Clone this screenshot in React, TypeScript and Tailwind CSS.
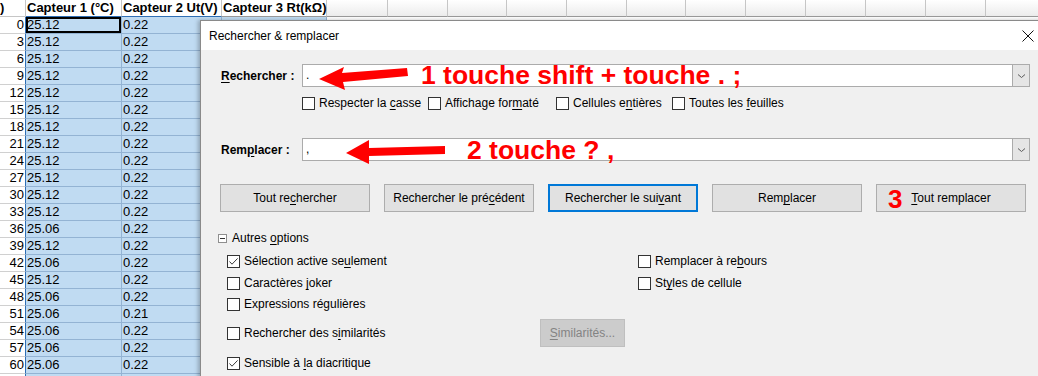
import React from "react";

const ROWS: [number, string, string][] = [
  [0, "25.12", "0.22"],
  [3, "25.12", "0.22"],
  [6, "25.12", "0.22"],
  [9, "25.12", "0.22"],
  [12, "25.12", "0.22"],
  [15, "25.12", "0.22"],
  [18, "25.12", "0.22"],
  [21, "25.12", "0.22"],
  [24, "25.12", "0.22"],
  [27, "25.12", "0.22"],
  [30, "25.12", "0.22"],
  [33, "25.12", "0.22"],
  [36, "25.06", "0.22"],
  [39, "25.12", "0.22"],
  [42, "25.06", "0.22"],
  [45, "25.12", "0.22"],
  [48, "25.06", "0.22"],
  [51, "25.06", "0.21"],
  [54, "25.06", "0.22"],
  [57, "25.06", "0.22"],
  [60, "25.06", "0.22"],
];

const EXTRA_COLS = [61, 60, 59, 60, 60, 59, 60, 60, 60, 60, 60, 60];

function U({ children }: { children: React.ReactNode }) {
  return <span className="underline underline-offset-2">{children}</span>;
}

function Sheet() {
  return (
    <div className="flex flex-col font-['Liberation_Sans',Arial,sans-serif] text-[13px] text-black">
      <div className="flex h-[17px]">
        <div className="w-[26px] shrink-0 border-r border-b border-[#c6c6c6] font-bold leading-[16px]">)</div>
        <div className="w-[96px] shrink-0 border-r border-b border-r-[#c6c6c6] border-b-[#2f6fb5] pl-px font-bold leading-[16px]">
          Capteur 1 (°C)
        </div>
        <div className="w-[100px] shrink-0 border-r border-b border-r-[#c6c6c6] border-b-[#2f6fb5] pl-px font-bold leading-[16px]">
          Capteur 2 Ut(V)
        </div>
        <div className="w-[105px] shrink-0 border-r border-b border-r-[#c6c6c6] border-b-[#9a9a9a] pl-px font-bold leading-[16px] whitespace-nowrap">
          Capteur 3 Rt(kΩ)
        </div>
        {EXTRA_COLS.map((w, i) => (
          <div
            key={i}
            style={{ width: w }}
            className="shrink-0 border-r border-b border-r-[#c6c6c6] border-b-[#9a9a9a] bg-gradient-to-b from-white to-[#ececec]"
          />
        ))}
      </div>
      {ROWS.map(([n, a, b], i) => (
        <div key={n} className="flex h-[17px]">
          <div className="w-[26px] shrink-0 border-r border-b border-r-[#2f6fb5] border-b-[#d0d0d0] pr-px text-right leading-[16px]">
            {n}
          </div>
          <div
            className={`w-[96px] shrink-0 border-r border-b border-[#93b3d3] bg-[#c0dbf2] pl-px leading-[16px] ${
              i === 0 ? "shadow-[inset_0_0_0_2px_#000]" : ""
            }`}
          >
            {a}
          </div>
          <div className="w-[100px] shrink-0 border-r border-b border-[#93b3d3] bg-[#c0dbf2] pl-px leading-[16px]">{b}</div>
          <div className="w-[105px] shrink-0 border-r border-b border-[#93b3d3] bg-[#c0dbf2]" />
        </div>
      ))}
      {/* partial row below the last visible one */}
      <div className="flex h-[17px]">
        <div className="w-[26px] shrink-0 border-r border-r-[#2f6fb5]" />
        <div className="w-[96px] shrink-0 border-r border-[#93b3d3] bg-[#c0dbf2]" />
        <div className="w-[100px] shrink-0 border-r border-[#93b3d3] bg-[#c0dbf2]" />
      </div>
    </div>
  );
}

function Box({ checked }: { checked?: boolean }) {
  return (
    <span className="flex h-[13px] w-[13px] shrink-0 items-center justify-center border border-[#333333] bg-white">
      {checked ? (
        <svg width="11" height="11" viewBox="0 0 11 11">
          <path d="M1.5 5.5 L4 8.2 L9.6 2.4" fill="none" stroke="#3c3c3c" strokeWidth="1" />
        </svg>
      ) : null}
    </span>
  );
}

function Check({
  checked,
  children,
  className,
}: {
  checked?: boolean;
  children: React.ReactNode;
  className?: string;
}) {
  return (
    <div className={`flex h-[13px] shrink-0 items-center gap-[4px] ${className ?? ""}`}>
      <Box checked={checked} />
      <span className="whitespace-nowrap leading-[13px]">{children}</span>
    </div>
  );
}

function Btn({
  children,
  focused,
  extra,
}: {
  children: React.ReactNode;
  focused?: boolean;
  extra?: React.ReactNode;
}) {
  return (
    <div
      className={`relative flex h-[28px] w-[150px] shrink-0 items-center justify-center bg-[#e1e1e1] ${
        focused ? "border-2 border-[#0078d7]" : "border border-[#adadad]"
      }`}
    >
      {extra}
      <span className="whitespace-nowrap">{children}</span>
    </div>
  );
}

function Combo({ value, children }: { value: string; children?: React.ReactNode }) {
  return (
    <div className="relative flex h-[23px] w-[728px] shrink-0 border border-[#ababab] bg-white">
      <span className="flex-1 pl-[3px] leading-[20px]">{value}</span>
      <span className="flex w-[17px] items-center justify-center border-l border-[#ababab] bg-[#e5e5e5]">
        <svg width="9" height="6" viewBox="0 0 9 6">
          <path d="M1 1.5 L4.5 4.5 L8 1.5" fill="none" stroke="#5a5a5a" strokeWidth="1" />
        </svg>
      </span>
      {children}
    </div>
  );
}

function Dialog() {
  return (
    <div className="absolute left-[200px] top-[20px] flex h-[360px] w-[851px] flex-col border-t border-l border-[#8a8a8a] bg-[#f0f0f0] font-['Liberation_Sans',Arial,sans-serif] text-[12px] text-black shadow-[-2px_0_4px_rgba(0,0,0,0.25)]">
      <div className="flex h-[29px] shrink-0 items-center justify-between bg-white pl-[8px]">
        <span>Rechercher &amp; remplacer</span>
        <span className="flex h-[29px] w-[46px] items-center justify-center">
          <svg width="12" height="12" viewBox="0 0 12 12">
            <path d="M0.5 0.5 L11.5 11.5 M11.5 0.5 L0.5 11.5" stroke="#111" strokeWidth="1" />
          </svg>
        </span>
      </div>

      <div className="flex flex-1 flex-col pl-[20px] pt-[14px]">
        <div className="flex items-center">
          <span className="w-[81px] shrink-0 font-bold">
            <U>R</U>echercher :
          </span>
          <Combo value=".">
            <svg className="absolute left-0 top-0 overflow-visible" width="120" height="26" viewBox="0 0 120 26">
              <polygon points="16,14 41,2 39,8 104,3 105,11 40,17 42,25" fill="#ff0000" />
            </svg>
            <span className="absolute left-[118px] top-[-3px] whitespace-nowrap text-[26.5px] font-bold leading-[26px] text-[#ff0000]">
              1 touche shift + touche . ;
            </span>
          </Combo>
        </div>

        <div className="ml-[81px] mt-[10px] flex">
          <Check className="w-[126px]">
            Respecter la <U>c</U>asse
          </Check>
          <Check className="w-[128px]">
            Affichage for<U>m</U>até
          </Check>
          <Check className="w-[116px]">
            Cellules e<U>n</U>tières
          </Check>
          <Check>
            Toutes les <U>f</U>euilles
          </Check>
        </div>

        <div className="mt-[28px] flex items-center">
          <span className="w-[81px] shrink-0 font-bold">
            Rem<U>p</U>lacer :
          </span>
          <Combo value=",">
            <svg className="absolute left-0 top-0 overflow-visible" width="150" height="26" viewBox="0 0 150 26">
              <polygon points="43,14 66,1 66,9 142,7 142,15 66,17 66,25" fill="#ff0000" />
            </svg>
            <span className="absolute left-[164px] top-[-2px] whitespace-nowrap text-[26.5px] font-bold leading-[26px] text-[#ff0000]">
              2 touche ? ,
            </span>
          </Combo>
        </div>

        <div className="-ml-px mt-[23px] flex gap-[14px]">
          <Btn>
            Tout re<U>c</U>hercher
          </Btn>
          <Btn>
            Rechercher le pré<U>c</U>édent
          </Btn>
          <Btn focused>
            Rechercher le sui<U>v</U>ant
          </Btn>
          <Btn>
            Rem<U>p</U>lacer
          </Btn>
          <Btn
            extra={
              <span className="absolute left-[11px] top-[1px] text-[26px] font-bold leading-[26px] text-[#ff0000]">3</span>
            }
          >
            <U>T</U>out remplacer
          </Btn>
        </div>

        <div className="-ml-[3px] mt-[19px] flex h-[14px] items-center gap-[5px]">
          <span className="flex h-[9px] w-[9px] items-center justify-center border border-[#8f8f8f] bg-white">
            <span className="h-px w-[5px] bg-[#333]" />
          </span>
          <span>
            Autres <U>o</U>ptions
          </span>
        </div>

        <div className="ml-[6px] mt-[10px] flex flex-col">
          <div className="flex">
            <Check checked className="w-[411px]">
              Sélection active se<U>u</U>lement
            </Check>
            <Check>
              Remplacer à re<U>b</U>ours
            </Check>
          </div>
          <div className="mt-[9px] flex">
            <Check className="w-[411px]">
              Caractères <U>j</U>oker
            </Check>
            <Check>
              St<U>y</U>les de cellule
            </Check>
          </div>
          <Check className="mt-[8px]">Expressions régulières</Check>
          <div className="mt-[8px] flex h-[28px] items-center">
            <Check className="w-[313px]">
              Rechercher des s<U>i</U>milarités
            </Check>
            <div className="flex h-[28px] w-[85px] items-center justify-center border border-[#bfbfbf] bg-[#cccccc] text-[#838383]">
              <span>
                <U>S</U>imilarités...
              </span>
            </div>
          </div>
          <Check checked className="mt-[10px]">
            Sensible à <U>l</U>a diacritique
          </Check>
        </div>
      </div>
    </div>
  );
}

export default function App() {
  return (
    <div className="relative h-[376px] w-[1038px] overflow-hidden bg-white">
      <Sheet />
      <Dialog />
    </div>
  );
}
